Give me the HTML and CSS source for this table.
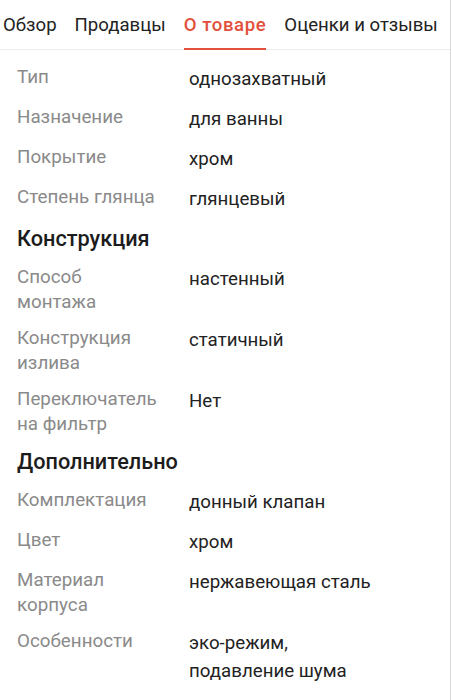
FILE: index.html
```html
<!DOCTYPE html>
<html lang="ru">
<head>
<meta charset="utf-8">
<link rel="stylesheet" href="styles.css">
</head>
<body>
<div class="page">
  <nav class="tabs">
    <div class="tab">Обзор</div>
    <div class="tab">Продавцы</div>
    <div class="tab active">О товаре</div>
    <div class="tab">Оценки и отзывы</div>
  </nav>
  <div class="specs">
    <div class="row"><div class="label">Тип</div><div class="value">однозахватный</div></div>
    <div class="row"><div class="label">Назначение</div><div class="value">для ванны</div></div>
    <div class="row"><div class="label">Покрытие</div><div class="value">хром</div></div>
    <div class="row"><div class="label">Степень глянца</div><div class="value">глянцевый</div></div>
    <h2 class="heading">Конструкция</h2>
    <div class="row"><div class="label">Способ<br>монтажа</div><div class="value">настенный</div></div>
    <div class="row"><div class="label">Конструкция<br>излива</div><div class="value">статичный</div></div>
    <div class="row"><div class="label">Переключатель<br>на фильтр</div><div class="value">Нет</div></div>
    <h2 class="heading">Дополнительно</h2>
    <div class="row"><div class="label">Комплектация</div><div class="value">донный клапан</div></div>
    <div class="row"><div class="label">Цвет</div><div class="value">хром</div></div>
    <div class="row"><div class="label">Материал<br>корпуса</div><div class="value">нержавеющая сталь</div></div>
    <div class="row"><div class="label">Особенности</div><div class="value">эко-режим,<br>подавление шума</div></div>
  </div>
</div>
</body>
</html>
```
FILE: styles.css
```css
* { box-sizing: border-box; }
html, body { margin: 0; padding: 0; background: #fff; }
body {
  font-family: Roboto, "Noto Sans", sans-serif;
  color: #222;
}
.page {
  width: 451px;
  min-height: 700px;
  border-right: 1px solid #d8d8d8;
  overflow: hidden;
}
.tabs {
  display: flex;
  gap: 18px;
  padding-left: 3px;
  height: 50px;
  border-bottom: 1px solid #ececec;
  white-space: nowrap;
}
.tab {
  font-size: 18.6px;
  line-height: 50px;
  height: 50px;
  color: #222;
  border-bottom: 2px solid transparent;
  margin-bottom: -1px;
}
.tab.active {
  color: #e2503c;
  font-weight: 500;
  letter-spacing: 0.6px;
  border-bottom-color: #e2503c;
}
.specs {
  padding: 9px 0 0 17px;
}
.row {
  display: grid;
  grid-template-columns: 172px 1fr;
  padding: 6px 0;
}
.label {
  font-size: 18.8px;
  line-height: 24.5px;
  color: #8a8a8a;
}
.value {
  font-size: 18.7px;
  line-height: 28px;
  color: #222;
}
.heading {
  margin: 0;
  padding: 6px 0;
  font-size: 21.7px;
  font-weight: 500;
  line-height: 28px;
  color: #1c1c1c;
}
```
